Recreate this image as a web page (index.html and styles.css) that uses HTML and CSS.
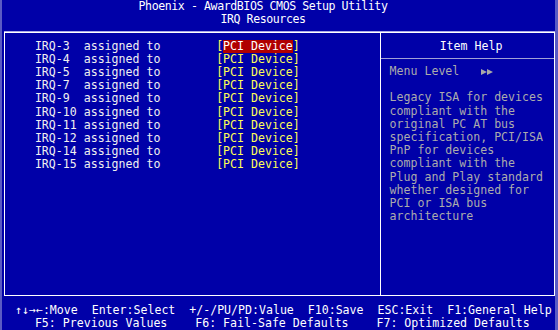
FILE: index.html
```html
<!DOCTYPE html>
<html lang="en">
<head>
<meta charset="UTF-8">
<title>IRQ Resources</title>
<link rel="stylesheet" href="styles.css">
</head>
<body>
  <div class="screen">
    <header class="title">
      <div>Phoenix - AwardBIOS CMOS Setup Utility</div>
      <div>IRQ Resources</div>
    </header>

    <div class="frame">
      <div class="items">
        <div class="item"><span class="label">IRQ-3  assigned to</span><span class="value">[<span class="sel">PCI Device</span>]</span></div>
        <div class="item"><span class="label">IRQ-4  assigned to</span><span class="value">[PCI Device]</span></div>
        <div class="item"><span class="label">IRQ-5  assigned to</span><span class="value">[PCI Device]</span></div>
        <div class="item"><span class="label">IRQ-7  assigned to</span><span class="value">[PCI Device]</span></div>
        <div class="item"><span class="label">IRQ-9  assigned to</span><span class="value">[PCI Device]</span></div>
        <div class="item"><span class="label">IRQ-10 assigned to</span><span class="value">[PCI Device]</span></div>
        <div class="item"><span class="label">IRQ-11 assigned to</span><span class="value">[PCI Device]</span></div>
        <div class="item"><span class="label">IRQ-12 assigned to</span><span class="value">[PCI Device]</span></div>
        <div class="item"><span class="label">IRQ-14 assigned to</span><span class="value">[PCI Device]</span></div>
        <div class="item"><span class="label">IRQ-15 assigned to</span><span class="value">[PCI Device]</span></div>
      </div>

      <div class="help">
        <div class="help-title">Item Help</div>
        <div class="help-body">
          <div class="menu-level">
            <span class="menu-label">Menu Level</span>
            <svg class="arrows" width="13" height="6" viewBox="0 0 13 6">
              <polygon points="0,0 6,3 0,6" fill="#a8a8a8"/>
              <polygon points="6,0 12,3 6,6" fill="#a8a8a8"/>
            </svg>
          </div>
          <div class="help-text">
            <div>Legacy ISA for devices</div>
            <div>compliant with the</div>
            <div>original PC AT bus</div>
            <div>specification, PCI/ISA</div>
            <div>PnP for devices</div>
            <div>compliant with the</div>
            <div>Plug and Play standard</div>
            <div>whether designed for</div>
            <div>PCI or ISA bus</div>
            <div>architecture</div>
          </div>
        </div>
      </div>
    </div>

    <footer class="keys">
      <div class="keys-row first">↑↓→←:Move  Enter:Select  +/-/PU/PD:Value  F10:Save  ESC:Exit  F1:General Help</div>
      <div class="keys-row second">F5: Previous Values    F6: Fail-Safe Defaults    F7: Optimized Defaults</div>
    </footer>
  </div>
</body>
</html>
```

FILE: styles.css
```css
body {
  margin: 0;
  background-color: #0000a8;
  font-family: 'DejaVu Sans Mono', 'Liberation Mono', monospace;
  font-size: 11.58px;
  line-height: 13.2px;
  color: #f0f0f0;
}
.screen {
  width: 558px;
  height: 330px;
  box-sizing: border-box;
  padding-left: 4px;
  box-shadow: inset 2px 0 0 #5a5ac4, inset -3px 0 0 #5a5ac4;
  overflow: hidden;
}
.title {
  height: 26.4px;
  text-align: center;
  padding-right: 36px;
  letter-spacing: -0.42px;
  color: #ffffff;
}
.frame {
  display: flex;
  width: 551px;
  height: 264px;
  box-sizing: border-box;
  margin-top: 5.6px;
  border: 1px solid #ffffff;
  box-shadow: 0 -1px 0 #a8a8e8;
}
.items {
  width: 376px;
  box-sizing: border-box;
  padding: 6.6px 0 0 29.9px;
  border-right: 1px solid #ffffff;
}
.item {
  display: flex;
  height: 13.2px;
}
.label {
  width: 26ch;
  white-space: pre;
}
.value {
  color: #ffff55;
  white-space: pre;
}
.sel {
  background-color: #b00000;
  color: #ffffff;
  display: inline-block;
  height: 13.2px;
}
.help {
  flex: 1;
  display: flex;
  flex-direction: column;
}
.help-title {
  height: 26px;
  box-sizing: border-box;
  padding: 6.6px 0 0 7px;
  text-align: center;
  color: #ffffff;
  border-bottom: 1px solid #a0a0d8;
}
.help-body {
  padding: 6px 0 0 8.6px;
  color: #acacac;
}
.menu-level {
  display: flex;
  align-items: center;
  height: 13.2px;
  margin-bottom: 13.2px;
}
.menu-label {
  width: 13ch;
}
.arrows {
  margin-left: 1px;
}
.keys {
  margin-top: 7.6px;
  color: #ffffff;
}
.keys-row {
  height: 13.2px;
  white-space: pre;
}
.keys-row.first {
  padding-left: 11px;
}
.keys-row.second {
  padding-left: 30.9px;
}
```
